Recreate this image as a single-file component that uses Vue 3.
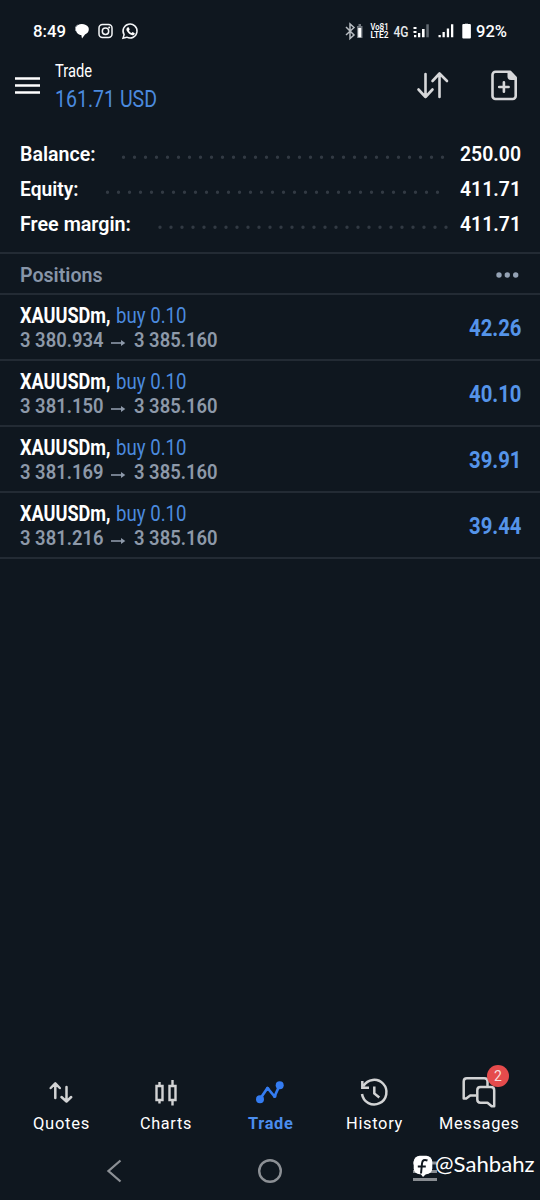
<script setup>
import { h } from 'vue'

// Text fitted to a fixed width, used for the condensed numerals and labels.
const Fit = (props) =>
  h('svg', { class: 'fit', width: props.w, height: 24, viewBox: `0 0 ${props.w} 24` }, [
    h('text', { x: 0, y: 18.6, textLength: props.w, lengthAdjust: 'spacingAndGlyphs' }, props.t),
  ])
Fit.props = ['t', 'w']

const summary = [
  { label: 'Balance:', lw: 75.5, value: '250.00', vw: 61, from: 123.5, to: 443.5 },
  { label: 'Equity:', lw: 58.5, value: '411.71', vw: 61, from: 107.5, to: 438.5 },
  { label: 'Free margin:', lw: 111, value: '411.71', vw: 61, from: 159.5, to: 446.5 },
]
const positions = [
  { open: '3 380.934', profit: '42.26' },
  { open: '3 381.150', profit: '40.10' },
  { open: '3 381.169', profit: '39.91' },
  { open: '3 381.216', profit: '39.44' },
]
</script>

<template>
  <main class="screen">
    <div class="status">
      <Fit class="clock" t="8:49" :w="33" />
      <svg class="notif" width="70" height="20" viewBox="75 21 70 20">
        <path d="M78 25c3-2 9-1 10.500 2.500 1 3-.5 6-3.500 7l-3 4-.7-3.500C77 35 73 28 78 25Z" fill="#fff" />
        <path d="M77 32c-3-2-2-6 1-7" fill="none" stroke="#aeb4ba" />
        <g fill="none" stroke="#f4f6f8" stroke-width="1.500">
          <rect x="99" y="24.600" width="13" height="13" rx="3.500" />
          <circle cx="105.500" cy="31.200" r="3.200" />
          <path d="M123 38.200l1.100-3.500a7 7 0 1 1 2.700 2.500Z" />
        </g>
        <circle cx="109.200" cy="27.500" r="1" fill="#fff" />
        <path d="M127.300 27.600l1.400-.3 1 2.200-.8 1.200c.6 1.100 1.500 1.900 2.700 2.400l1-1 2.200 1.100c0 1.600-1.400 2.200-2.500 2-3.200-.6-6.200-4.400-5.900-6.200Z" fill="#fff" />
      </svg>
      <svg class="signals" width="130" height="20" viewBox="344 21 130 20">
        <path d="M346 27l8 8-4 3.500V24l4 3.500-8 7.500" fill="none" stroke="#b7bcc1" stroke-width="1.500" />
        <path d="M357 26h1.500v-2h2.500V26h1.500v12H357Z" fill="#70777e" />
        <path d="M358.200 28h3v9.300h-3Z" fill="#fff" />
        <g class="tiny">
          <text x="370.500" y="30.300" textLength="18" lengthAdjust="spacingAndGlyphs">Vo§1</text>
          <text x="370.500" y="37.500" textLength="18" lengthAdjust="spacingAndGlyphs">LTE2</text>
        </g>
        <text class="net" x="393.500" y="36.500" textLength="15" lengthAdjust="spacingAndGlyphs">4G</text>
        <g fill="#fff">
          <path d="M413.500 27h3v2h-3zM413.500 31h3v2h-3zM414 35h2.300v2.300H414zM418 33h2.300v4.300H418zM422 29h2.600v8.300H422z" />
          <path d="M426.300 24.300h2.500v13h-2.500z" fill="#626a72" />
          <path d="M438.500 35h2.300v2.300h-2.300zM442.500 32h2.300v5.300h-2.300zM446.800 28.500h2.300v8.800h-2.300zM451 24.300h2.300v13H451z" />
          <path d="M465 23.300h3v1.200h-3z" fill="#747b82" />
          <rect x="462.300" y="24" width="8.600" height="14.500" rx="1" />
        </g>
      </svg>
      <Fit class="clock battery" t="92%" :w="31" />
    </div>

    <header class="top">
      <svg class="menu" width="26" height="20" viewBox="0 0 26 20"><path d="M0 3.500h25M0 10.500h25M0 17.500h25" stroke="#fff" stroke-width="2.600" /></svg>
      <div class="title">
        <Fit class="name" t="Trade" :w="37" />
        <Fit class="total" t="161.71 USD" :w="102" />
      </div>
      <svg class="actions" width="105" height="36" viewBox="415 68 105 36">
        <g fill="none" stroke="#d6d7d9" stroke-width="2.600" stroke-linecap="round" stroke-linejoin="round">
          <path d="M425.500 74v23M418.500 89.500l7 7.500 7-7.500M439.500 97V74M432.500 81l7-7.500 7.500 7.500" />
          <path d="M495.500 71.700H510l5.700 6V96a3 3 0 0 1-3 3H495.500a3 3 0 0 1-3-3V74.700a3 3 0 0 1 3-3Z" />
          <path d="M499.200 87h9.400M503.900 82.300v9.400" />
        </g>
        <path d="M507.500 71.500l2.500-.5 6 7v2h-5a3.500 3.500 0 0 1-3.500-3.500Z" fill="#d6d7d9" />
      </svg>
    </header>

    <section class="summary">
      <div v-for="s in summary" :key="s.label" class="sum">
        <Fit :t="s.label" :w="s.lw" />
        <svg class="leader" height="24" width="1">
          <line :x1="s.from - 19.5 - s.lw" :x2="s.to - 19.5 - s.lw" y1="15.300" y2="15.300" />
        </svg>
        <Fit :t="s.value" :w="s.vw" />
      </div>
    </section>

    <div class="section-head">
      <Fit t="Positions" :w="82.5" />
      <svg width="24" height="8" viewBox="0 0 24 8" fill="#94a2b4"><circle cx="3" cy="4" r="2.700" /><circle cx="11.300" cy="4" r="2.700" /><circle cx="19.700" cy="4" r="2.700" /></svg>
    </div>

    <article v-for="p in positions" :key="p.open" class="position">
      <div class="details">
        <div class="line first">
          <Fit class="symbol" t="XAUUSDm," :w="90.5" />
          <Fit class="side" t="buy 0.10" :w="70.5" />
        </div>
        <div class="line prices">
          <Fit :t="p.open" :w="83.5" />
          <svg width="15" height="24" viewBox="0 0 15 24"><path d="M0 15h13" fill="none" stroke="#8d99a9" stroke-width="1.600" /><path d="M10 12l4.300 3-4.300 3Z" fill="#8d99a9" /></svg>
          <Fit t="3 385.160" :w="83.5" />
        </div>
      </div>
      <Fit class="profit" :t="p.profit" :w="52.5" />
    </article>

    <nav class="tabs">
      <div class="tab">
        <svg width="40" height="36" viewBox="41 1074 40 36" fill="none" stroke="#d2d3d4" stroke-width="2.500" stroke-linecap="round" stroke-linejoin="round"><path d="M55.300 1098v-14M50.700 1088l4.600-4.700 4.500 4.700M66.500 1087v14M61.500 1097l5 4.500 4.700-4.500" /></svg>
        <Fit t="Quotes" :w="57" />
      </div>
      <div class="tab">
        <svg width="40" height="36" viewBox="145.500 1074 40 36" fill="none" stroke="#d2d3d4" stroke-width="2.400"><path d="M156 1086h6v14h-6zM159 1082v4M159 1100v3.500M169 1086h6v14h-6zM172 1080v6M172 1100v5.500" /></svg>
        <Fit t="Charts" :w="52" />
      </div>
      <div class="tab active">
        <svg width="40" height="36" viewBox="250 1074 40 36" fill="#347cf1"><path d="M260 1099l7.500-11 7 8.500 5-11" fill="none" stroke="#347cf1" stroke-width="2.700" stroke-linejoin="round" /><circle cx="260" cy="1099.300" r="4" /><circle cx="279.700" cy="1085.300" r="4" /><circle cx="267.700" cy="1089" r="1.900" /><circle cx="274.700" cy="1096" r="1.900" /></svg>
        <Fit t="Trade" :w="45.5" />
      </div>
      <div class="tab">
        <svg width="40" height="36" viewBox="355 1074 40 36" fill="none" stroke="#d2d3d4" stroke-width="2.500"><path d="M363.500 1086a12.300 12.300 0 1 1-1.500 8M362.300 1081v6.800h6.700M374.300 1086.500v7l5 4" /></svg>
        <Fit t="History" :w="57" />
      </div>
      <div class="tab">
        <svg width="40" height="36" viewBox="459 1074 40 36" fill="none" stroke="#d2d3d4" stroke-width="2.500" stroke-linejoin="round"><path d="M487.500 1086V1081.500q0-3.200-3.200-3.200H466.900q-3.200 0-3.200 3.200v17h2.500l4-3H476" /><path d="M480.500 1087H491q3.200 0 3.200 3.200V1106.300h-2.500l-4.200-3.500h-7q-3.200 0-3.200-3.200v-9.400q0-3.200 3.200-3.200Z" /></svg>
        <Fit t="Messages" :w="80.5" />
        <span class="badge">2</span>
      </div>
    </nav>

    <footer class="system">
      <svg width="18" height="26" viewBox="0 0 18 26"><path d="M15.500 2.500L3.500 13l12 10.500" fill="none" stroke="#8c9095" stroke-width="2.300" /></svg>
      <svg class="home" width="26" height="26" viewBox="0 0 26 26"><circle cx="13" cy="13" r="10.800" fill="none" stroke="#8c9095" stroke-width="2.400" /></svg>
      <div class="watermark">
        <svg width="26" height="30" viewBox="412 1152 26 30">
          <path d="M413 1163h24M413 1171.500h24M413 1179.500h24" stroke="#898d92" stroke-width="2.800" />
          <rect x="413.700" y="1155.700" width="18.600" height="18.600" rx="6" fill="#fff" />
          <path d="M420 1173h7l-4 4Z" fill="#fff" />
          <path d="M427.500 1160.500q-5-2-5.500 3l-1 10M417.800 1166.500h8" fill="none" stroke="#10171f" stroke-width="2" />
        </svg>
        <Fit class="handle" t="@Sahbahz" :w="99.5" />
      </div>
    </footer>
  </main>
</template>

<style>
body { margin: 0; background: #0f171f; }
</style>

<style scoped>
.screen { width: 540px; height: 1200px; background: #0f171f; color: #fff; font-family: Roboto, "Liberation Sans", sans-serif; display: flex; flex-direction: column; overflow: hidden; }
svg { display: block; flex: none; }
.fit { overflow: visible; fill: currentColor; }
.status { height: 62px; box-sizing: border-box; padding: 18px 0 0 33px; display: flex; }
.clock { font-size: 17px; font-weight: 500; }
.notif { margin: 3px 0 0 9px; }
.signals { margin: 3px 0 0 199px; }
.battery { margin-left: 2px; }
.tiny { fill: #fff; font-size: 8.6px; font-weight: 600; }
.net { fill: #e6e8ea; font-size: 15.5px; font-weight: 500; }
.top { height: 75px; display: flex; }
.menu { margin: 13px 0 0 15px; }
.title { width: 360px; padding: 0 0 0 14px; box-sizing: border-box; margin-top: -4px; }
.name { font-size: 17.5px; }
.total { margin-top: 6px; color: #4b8ade; font-size: 23.5px; }
.actions { margin: 6px 0 0 14px; }
.summary { height: 115px; padding: 5px 19.5px 0 19.5px; box-sizing: border-box; font-size: 19.5px; font-weight: 600; }
.sum { height: 35px; display: flex; justify-content: space-between; }
.leader { overflow: visible; margin-right: auto; }
.leader line { stroke: #323a43; stroke-width: 3.4; stroke-linecap: round; stroke-dasharray: 0 11; }
.section-head { height: 43px; box-sizing: border-box; border-top: 2px solid #232b34; border-bottom: 2px solid #232b34; display: flex; justify-content: space-between; padding: 9px 20px 0 19.5px; color: #8795a8; font-size: 19.5px; font-weight: 600; }
.section-head svg:last-child { margin-top: 7.5px; }
.position { height: 66px; box-sizing: border-box; border-bottom: 2px solid #232b34; padding: 9px 18.5px 0 19.5px; display: flex; justify-content: space-between; }
.line { display: flex; height: 24px; }
.first { gap: 5.5px; font-size: 21.5px; }
.symbol { font-weight: 700; }
.side { color: #4b8ade; }
.prices { gap: 8px; font-size: 21px; font-weight: 600; color: #8d99a9; }
.profit { margin-top: 13px; font-size: 24px; font-weight: 700; color: #5594e9; }
.tabs { margin-top: auto; height: 66px; padding: 0 9px; display: grid; grid-template-columns: repeat(5, 104.5px); font-size: 16.5px; letter-spacing: .7px; }
.tab { display: flex; flex-direction: column; align-items: center; position: relative; }
.active { color: #4b8ded; font-weight: 700; }
.badge { position: absolute; left: 60px; top: -9px; width: 22px; height: 22px; border-radius: 50%; background: #e54b4c; color: #f6dddd; font-size: 14px; line-height: 22px; text-align: center; letter-spacing: 0; }
.system { height: 60px; display: flex; padding-left: 105px; box-sizing: border-box; }
.system > svg { margin-top: 18px; }
.home { margin-left: 134px; }
.watermark { display: flex; margin-left: 129px; padding-top: 12px; }
.handle { margin: 1px 0 0 -3px; font-family: Lato, sans-serif; font-size: 21.5px; }
</style>
